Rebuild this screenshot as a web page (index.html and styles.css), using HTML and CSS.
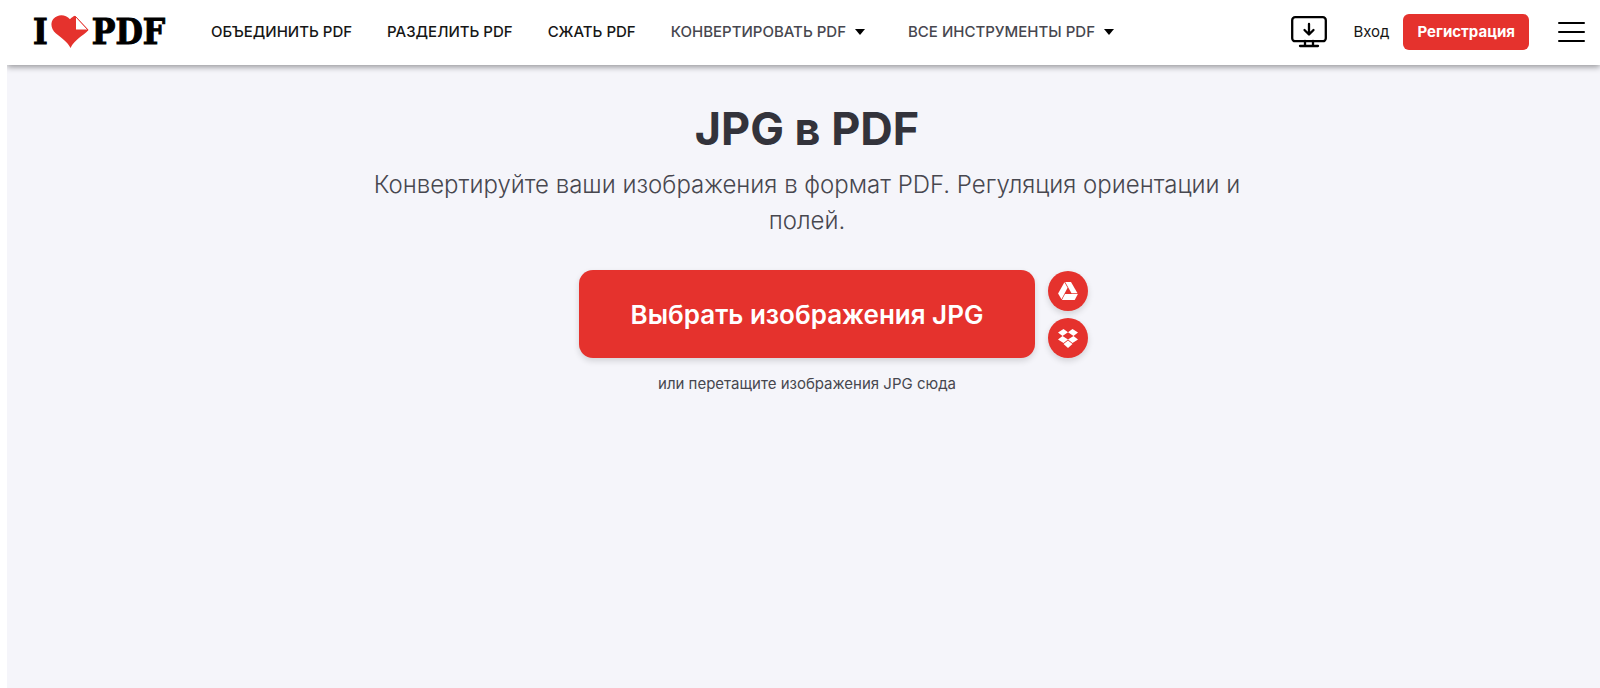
FILE: index.html
```
<!DOCTYPE html>
<html lang="ru">
<head>
    <meta charset="UTF-8">
    <meta name="viewport" content="width=device-width, initial-scale=1.0">
    <title>JPG в PDF</title>
    <link rel="stylesheet" href="styles.css">
</head>
<body>
    <header class="header">
        <a class="logo" href="#" aria-label="I love PDF">
            <span>I</span>
            <svg class="logo-heart" width="38" height="33" viewBox="0 0 38 33">
                <path fill="#e5322d" d="M19.500 33C17 27.500 11 23.500 5 18.500C0 14.300-1 8 2.500 3.800C7-1.300 14.500-.8 19 4.200C20.500 2.700 22 1.500 24 .8L37.500 15C32 21 23.500 24.500 19.500 33Z"/>
                <path fill="#fff" stroke="#e5322d" stroke-width="1" stroke-linejoin="round" d="M24.500 1.500V15H37Z"/>
            </svg>
            <span>PDF</span>
        </a>
        <nav class="menu">
            <a href="#">ОБЪЕДИНИТЬ PDF</a>
            <a href="#">РАЗДЕЛИТЬ PDF</a>
            <a href="#">СЖАТЬ PDF</a>
            <a class="has-list" href="#">КОНВЕРТИРОВАТЬ PDF</a>
            <a class="has-list" href="#">ВСЕ ИНСТРУМЕНТЫ PDF</a>
        </nav>
        <div class="actions">
            <a class="desktop" href="#" aria-label="Desktop">
                <svg width="36" height="32" viewBox="0 0 36 32" fill="none" stroke="#000" stroke-width="2.300" stroke-linecap="round" stroke-linejoin="round">
                    <rect x="1.200" y="1.200" width="33.600" height="24" rx="3"/>
                    <path d="M14 25v5M22 25v5M9 30h18M18 8v10M13.500 14l4.500 4.500 4.500-4.500"/>
                </svg>
            </a>
            <a class="login" href="#">Вход</a>
            <a class="signup" href="#">Регистрация</a>
            <button class="burger" type="button" aria-label="Меню"><i></i><i></i><i></i></button>
        </div>
    </header>

    <main class="tool">
        <h1>JPG в PDF</h1>
        <h2>Конвертируйте ваши изображения в формат PDF. Регуляция ориентации и полей.</h2>
        <div class="uploader">
            <button class="pick" type="button">Выбрать изображения JPG</button>
            <div class="sources">
                <button class="source" type="button" aria-label="Google Drive">
                    <svg width="20" height="18" viewBox="0 0 20 18" fill="#fff">
                        <path d="M6.400.3L9.600 5.800L3.500 17.200L.1 11.500Z"/>
                        <path d="M7.200 0H13L19.500 11.300H13.500Z"/>
                        <path d="M7 12H19.900L16.700 18H3.900Z"/>
                    </svg>
                </button>
                <button class="source" type="button" aria-label="Dropbox">
                    <svg width="20" height="19" viewBox="0 0 20 19" fill="#fff">
                        <path d="M5.500 0L10 3.300L4.500 6.900L0 3.500ZM14.500 0L20 3.500L15.500 6.900L10 3.300ZM0 10.500L4.500 7L10 10.500L5.500 14ZM15.500 7L20 10.500L14.500 14L10 10.500ZM10 11.500L14.500 15L10 19L5.500 15Z"/>
                    </svg>
                </button>
            </div>
        </div>
        <p class="hint">или перетащите изображения JPG сюда</p>
    </main>
</body>
</html>
```

FILE: styles.css
```
* {
    box-sizing: border-box;
}

body {
    display: flex;
    flex-direction: column;
    min-height: 100vh;
    margin: 0;
    padding-left: 7px;
    font-family: Inter, "Noto Sans", sans-serif;
    color: #33333b;
    background: #fff;
}

a {
    color: #161616;
    text-decoration: none;
}

button {
    padding: 0;
    border: 0;
    font-family: inherit;
    cursor: pointer;
}

svg {
    display: block;
}

.header {
    position: relative;
    display: flex;
    align-items: center;
    height: 65px;
    padding: 0 15px 2px 26px;
    background: #fff;
    box-shadow: 0 2px 6px rgba(0, 0, 0, 0.4);
    clip-path: inset(0 0 -12px 0);
}

.logo {
    display: flex;
    align-items: center;
    gap: 3px;
    color: #000;
    font: bold 35px/40px "DejaVu Serif Condensed", "DejaVu Serif", serif;
    -webkit-text-stroke: 1px #000;
}

.menu {
    display: flex;
    gap: 35px;
    margin-left: 46px;
    font-size: 15px;
    font-weight: 500;
    white-space: nowrap;
}

.menu .has-list {
    display: flex;
    align-items: center;
    gap: 9px;
    padding-right: 8px;
    color: #47474f;
}

.has-list::after {
    content: "";
    border: 5px solid transparent;
    border-top: 6px solid #000;
    border-bottom: 0;
}

.actions {
    display: flex;
    align-items: center;
    margin-left: auto;
}

.login {
    margin: 0 14px 0 26px;
    font-size: 15px;
}

.signup {
    padding: 0 14px;
    border-radius: 6px;
    color: #fff;
    background: #e5322d;
    font-size: 15px;
    font-weight: 700;
    line-height: 36px;
}

.burger {
    display: flex;
    flex-direction: column;
    gap: 7px;
    width: 27px;
    margin-left: 29px;
    background: none;
}

.burger i {
    height: 2px;
    border-radius: 1px;
    background: #000;
}

.tool {
    display: flex;
    flex: 1;
    flex-direction: column;
    align-items: center;
    padding: 36px 24px 36px 31px;
    text-align: center;
    background: #f5f5fa;
}

h1 {
    margin: 0;
    font-size: 45px;
    font-weight: 700;
    line-height: 56px;
}

h2 {
    max-width: 900px;
    margin: 10px 0 31px;
    color: #47474f;
    font-size: 24px;
    font-weight: 300;
    line-height: 36px;
}

.uploader {
    position: relative;
}

.pick {
    min-height: 88px;
    padding: 0 52px;
    border-radius: 14px;
    color: #fff;
    background: #e5322d;
    font-size: 26px;
    font-weight: 600;
    box-shadow: 0 3px 6px rgba(0, 0, 0, 0.14);
}

/* cloud buttons hang off the right side so the main button stays centred */
.sources {
    position: absolute;
    bottom: 0;
    left: 100%;
    display: flex;
    flex-direction: column;
    gap: 7px;
    margin-left: 13px;
}

.source {
    display: flex;
    align-items: center;
    justify-content: center;
    width: 40px;
    height: 40px;
    border-radius: 50%;
    background: #e5322d;
    box-shadow: 0 3px 6px rgba(0, 0, 0, 0.14);
}

.hint {
    margin: 14px 0 0;
    color: #47474f;
    font-size: 15px;
    line-height: 24px;
}
```
